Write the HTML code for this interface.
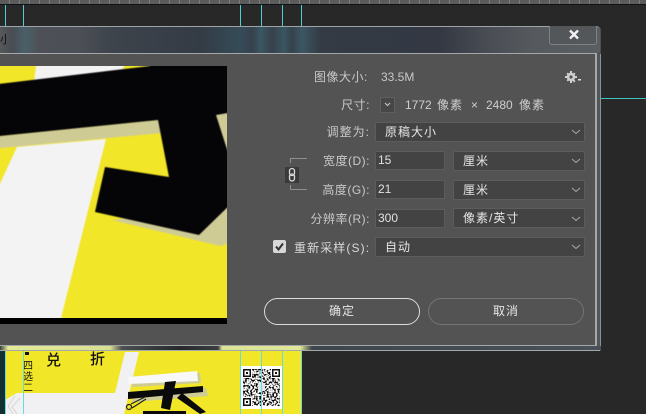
<!DOCTYPE html>
<html lang="zh"><head><meta charset="utf-8">
<style>
html,body{margin:0;padding:0;background:#282828;}
#p{position:relative;width:646px;height:414px;overflow:hidden;background:#282828;font-family:"Liberation Sans","Noto Sans CJK SC",sans-serif;font-size:12px;color:#d6d6d6;}
#p div{position:absolute;box-sizing:border-box;}
.g{width:1px;background:#4fd0d0;}
.l{white-space:nowrap;line-height:16px;height:16px;letter-spacing:.5px;}
.n{white-space:nowrap;line-height:16px;height:16px;color:#cfcfcf;}
.r{text-align:right;right:276px;color:#c8c8c8;}
.s{background:#434343;border:1px solid #5c5c5c;border-radius:2px;color:#e6e6e6;line-height:18px;padding-left:9px;letter-spacing:1px;white-space:nowrap;}
.i{background:#434343;border:1px solid #5c5c5c;color:#e0e0e0;line-height:17px;padding-left:2px;}
.b{border-radius:14px;text-align:center;line-height:25px;letter-spacing:1px;color:#e6e6e6;}
svg{position:absolute;display:block;}
</style></head><body><div id="p">
<div style="left:0;top:0;width:646px;height:4px;background:repeating-linear-gradient(90deg,#5c5c5c 0,#5c5c5c 9px,#7a7a7a 9px,#7a7a7a 10px)"></div>
<div style="left:0;top:4px;width:646px;height:1px;background:#111"></div>
<div class="g" style="left:5px;top:5px;height:21px"></div>
<div class="g" style="left:23px;top:5px;height:21px"></div>
<div class="g" style="left:240px;top:5px;height:21px"></div>
<div class="g" style="left:261px;top:5px;height:21px"></div>
<div class="g" style="left:282px;top:5px;height:21px"></div>
<div class="g" style="left:301px;top:5px;height:21px"></div>
<div style="left:601px;top:98px;width:45px;height:1px;background:#3fc4c4"></div>

<!-- poster below -->
<svg style="left:0;top:345px" width="310" height="69" viewBox="0 345 310 69">
<defs><filter id="q" x="0" y="0" width="100%" height="100%" color-interpolation-filters="sRGB"><feTurbulence type="fractalNoise" baseFrequency="0.55" numOctaves="1" seed="7"/><feColorMatrix values="0 0 0 0 0 0 0 0 0 0 0 0 0 0 0 6 0 0 0 -2.700"/><feComposite in2="SourceGraphic" operator="in"/></filter></defs>
<rect x="0" y="345" width="5" height="69" fill="#12302f"/>
<rect x="5" y="345" width="296" height="69" fill="#f2e628"/>
<polygon points="125,352 139,352 124,414 5,414 5,400 17,393 115,393" fill="#f1f1f3"/>
<path d="M20 398l-8 9 5 7M15 396l-7 10 5 8" fill="none" stroke="#d5d5d5"/>
<polygon points="132,378 200,373 201,383 132,387" fill="#cfcb95"/>
<polygon points="128,377 197,371 198,381 129,384" fill="#f8f8f8"/>
<polygon points="132,395 206,388 208,396 132,402" fill="#cfcb95"/>
<polygon points="128,392 203,386 203,392 128,399" fill="#0a0a0a"/>
<polygon points="165,382 176,381 170,410 161,408" fill="#0a0a0a"/>
<polygon points="182,393 206,412 200,414 177,398" fill="#0a0a0a"/>
<rect x="143" y="411" width="43" height="3" fill="#0a0a0a"/>
<g fill="none" stroke="#222" stroke-width="1.2"><path d="M131 404 L145 397 M132 408 L146 399"/><circle cx="129" cy="407" r="2.5"/></g>
<rect x="241" y="366" width="41" height="43" fill="#fff"/>
<rect x="243" y="369" width="37" height="37" fill="#000" filter="url(#q)"/>
<rect x="243" y="369" width="9" height="9" fill="#fff"/><rect x="271" y="369" width="9" height="9" fill="#fff"/><rect x="243" y="397" width="9" height="9" fill="#fff"/>
<g fill="#111">
<path d="M243 369h8v8h-8zM244.500 370.500v5h5v-5z" fill-rule="evenodd"/><rect x="246" y="372" width="2" height="2"/>
<path d="M272 369h8v8h-8zM273.500 370.500v5h5v-5z" fill-rule="evenodd"/><rect x="275" y="372" width="2" height="2"/>
<path d="M243 398h8v8h-8zM244.500 399.500v5h5v-5z" fill-rule="evenodd"/><rect x="246" y="401" width="2" height="2"/>
</g>
<rect x="258" y="383" width="7" height="8" fill="#dfe8e8"/>
<text x="46" y="365" font-family="Liberation Sans,Noto Sans CJK SC,sans-serif" font-size="15" fill="#111" font-weight="500">兑</text>
<text x="90" y="364" font-family="Liberation Sans,Noto Sans CJK SC,sans-serif" font-size="15" fill="#111" font-weight="500">折</text>
<g font-family="Liberation Sans,Noto Sans CJK SC,sans-serif" font-size="10" fill="#111"><text x="23" y="369">四</text><text x="23" y="380">选</text><text x="23" y="391">二</text></g>
<rect x="25" y="352" width="4" height="3" fill="#111"/>
<g fill="#67dcdc"><rect x="5" y="351" width="1" height="63"/><rect x="23" y="351" width="1" height="63"/><rect x="240" y="351" width="1" height="63"/><rect x="261" y="351" width="1" height="63"/><rect x="282" y="351" width="1" height="63"/><rect x="301" y="351" width="1" height="63"/></g>
</svg>

<!-- dialog frame -->
<div style="left:0;top:26px;width:601px;height:325px;border-top:1px solid #9da3a7;border-radius:0 5px 5px 0;background:#4a4f55"></div>
<div style="left:0;top:27px;width:600px;height:26px;border-radius:0 4px 0 0;background:linear-gradient(90deg,#56585a 0,#484d52 12px,#4a606a 25px,#4d5056 40px,#4c4f55 80px,#3e444c 110px,#343b45 200px,#344c58 240px,#36424d 252px,#3a5763 261px,#36424d 272px,#3a5561 284px,#36424d 292px,#3b5763 302px,#343b45 320px,#333843 440px,#4a4e54 490px,#55595e 530px,#5b5e61 600px)"></div>
<div style="left:0;top:53px;width:597px;height:293px;background:#535353;border-right:2px solid #a4a8ab;border-top:1px solid #a4a8ab;border-bottom:1px solid #a4a8ab"></div>
<div style="left:597px;top:54px;width:4px;height:297px;background:#50565c;border-right:1px solid #8d9296"></div>
<div style="left:0;top:346px;width:601px;height:5px;background:linear-gradient(90deg,#3a4040 0,#e4eb96 8px,#d8e090 110px,#4b4f50 122px,#26282a 180px,#3a3d40 218px,#dbe394 222px,#e0e898 300px,#3c444c 312px,#4a5058 600px)"></div>
<div style="left:0;top:350px;width:600px;height:1px;background:#a4a8aa"></div>
<div style="left:549px;top:26px;width:48px;height:19px;border:1px solid #7e8285;border-top:0;border-radius:0 0 3px 3px;background:#54575a"></div>
<svg style="left:568px;top:29px" width="12" height="11" viewBox="0 0 12 11"><path d="M2 1.5 L10 9.5 M10 1.5 L2 9.5" stroke="#f0f0f0" stroke-width="2.4"/></svg>
<div style="left:0;top:33px;font-size:11px;line-height:14px;color:#111;width:7px;overflow:hidden;white-space:nowrap">小</div>

<!-- preview image -->
<svg style="left:0;top:66px" width="227" height="258" viewBox="0 66 227 258">
<defs><filter id="b" filterUnits="userSpaceOnUse" x="-30" y="30" width="300" height="320" color-interpolation-filters="sRGB"><feGaussianBlur stdDeviation=".5"/></filter></defs>
<rect x="0" y="66" width="227" height="258" fill="#f2e628"/>
<g filter="url(#b)">
<polygon points="37,60 125,60 123,70 34,81" fill="#f3f3f4"/>
<polygon points="17,147 106,139 58,330 -10,330 -10,205" fill="#f3f3f4"/>
<polygon points="-10,137 158,120 162,133 -10,149" fill="#cfcb95"/>
<polygon points="112,220 220,246 240,240 240,205" fill="#cfcb95"/>
<polygon points="-10,85 150,66 150,60 240,60 240,195 199,235 95,212 105,167 169,177 158,120 -10,137" fill="#050407"/>
<polygon points="216,115 240,111 240,190" fill="#cfcb95"/>
</g>
<rect x="0" y="318" width="227" height="6" fill="#000"/>
</svg>

<!-- form -->
<div class="l" style="left:314px;top:69px;color:#c8c8c8">图像大小:</div>
<div class="n" style="left:381px;top:69px;color:#c8c8c8">33.5M</div>
<svg style="left:564px;top:70px" width="18" height="14" viewBox="0 0 18 14"><g fill="#cfcfcf"><circle cx="7" cy="7" r="4.2"/><path d="M6 1h2v12H6zM1 6h12v2H1zM2.5 3.9l1.4-1.4 7.6 8.6-1.4 1.4zM10.100 2.500l1.400 1.400-7.600 7.600-1.400-1.400z"/></g><circle cx="7" cy="7" r="1.600" fill="#535353"/><rect x="14" y="9" width="3" height="1.500" fill="#ddd"/></svg>

<div class="l r" style="top:97px">尺寸:</div>
<div style="left:380px;top:97px;width:15px;height:16px;background:#474747;border:1px solid #5f5f5f"></div>
<svg style="left:384px;top:102px" width="7" height="5"><path d="M1 1l2.500 2.500L6 1" fill="none" stroke="#ccc"/></svg>
<div class="n" style="left:405px;top:97px">1772</div>
<div class="n" style="left:437px;top:97px;letter-spacing:1px">像素</div>
<div class="n" style="left:471px;top:97px">×</div>
<div class="n" style="left:486px;top:97px">2480</div>
<div class="n" style="left:519px;top:97px;letter-spacing:1px">像素</div>

<div class="l r" style="top:124px;letter-spacing:1px">调整为:</div>
<div class="s" style="left:375px;top:122px;width:210px;height:20px">原稿大小</div>

<svg style="left:284px;top:156px" width="24" height="36" viewBox="0 0 24 36"><path d="M6.500 7V2.500H23M6.500 29V33.500H23" fill="none" stroke="#8f8f8f"/><rect x="1" y="11" width="14" height="16" fill="#3a3a3a"/><rect x="5.500" y="12.500" width="5" height="7" rx="2.500" fill="none" stroke="#dcdcdc" stroke-width="1.300"/><rect x="5.500" y="18" width="5" height="7" rx="2.500" fill="none" stroke="#dcdcdc" stroke-width="1.300"/></svg>

<div class="l r" style="top:153px">宽度(D):</div>
<div class="i" style="left:375px;top:151px;width:70px;height:19px">15</div>
<div class="s" style="left:453px;top:151px;width:132px;height:20px">厘米</div>

<div class="l r" style="top:182px">高度(G):</div>
<div class="i" style="left:375px;top:180px;width:70px;height:19px">21</div>
<div class="s" style="left:453px;top:180px;width:132px;height:20px">厘米</div>

<div class="l r" style="top:211px">分辨率(R):</div>
<div class="i" style="left:375px;top:209px;width:70px;height:19px">300</div>
<div class="s" style="left:453px;top:208px;width:132px;height:20px">像素/英寸</div>

<div style="left:273px;top:240px;width:13px;height:13px;background:#d8d8d8;border-radius:2px"></div>
<svg style="left:273px;top:240px" width="13" height="13"><path d="M3 6.500l2.500 3L10 3.500" fill="none" stroke="#333" stroke-width="2"/></svg>
<div class="l" style="left:294px;top:240px;color:#d8d8d8;letter-spacing:1.1px">重新采样(S):</div>
<div class="s" style="left:375px;top:237px;width:210px;height:20px">自动</div>

<svg style="left:570px;top:126px" width="12" height="130" viewBox="0 0 12 130"><g fill="none" stroke="#aaa"><path d="M2 4l4 3.500L10 4M2 33l4 3.500L10 33M2 62l4 3.500L10 62M2 91l4 3.500L10 91M2 119l4 3.500L10 119"/></g></svg>

<div class="b" style="left:264px;top:298px;width:156px;height:27px;border:1px solid #dcdcdc">确定</div>
<div class="b" style="left:428px;top:298px;width:156px;height:27px;border:1px solid #757575">取消</div>
</div></body></html>
